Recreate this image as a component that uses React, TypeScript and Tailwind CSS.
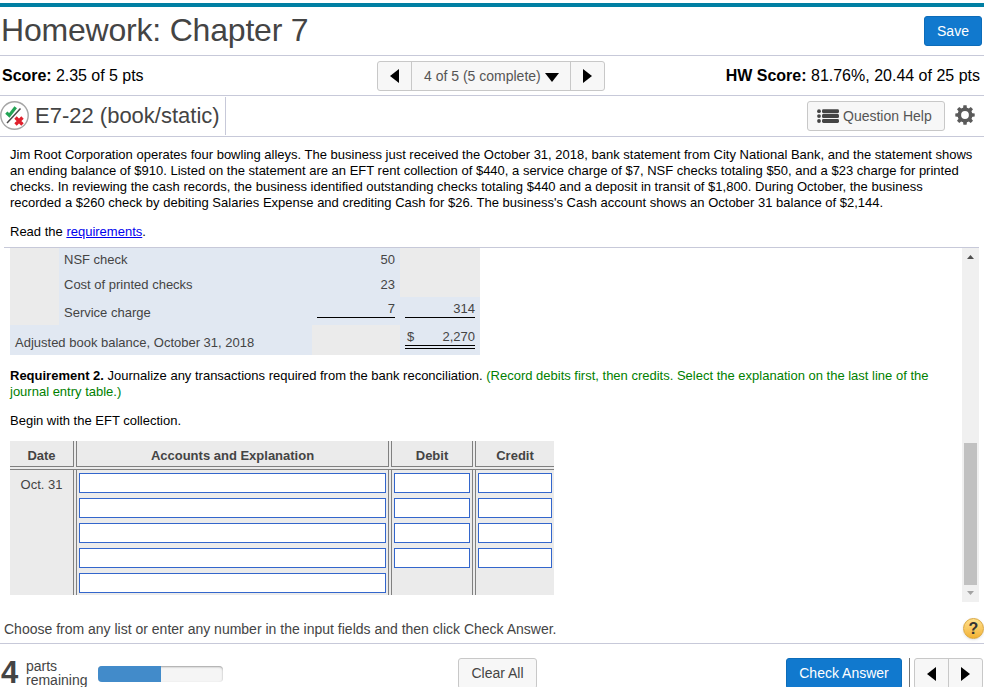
import type { ReactNode } from "react";
import clsx from "clsx";

const Arrow = ({ dir }: { dir: "left" | "right" | "down" }) => {
  const points = {
    left: "9,0 9,14 0,7",
    right: "0,0 0,14 9,7",
    down: "0,0 14,0 7,9",
  };
  return (
    <svg
      width={dir === "down" ? 14 : 9}
      height={dir === "down" ? 9 : 14}
      className={clsx("shrink-0", dir === "down" ? "mt-[3px]" : "mt-px")}
    >
      <polygon points={points[dir]} fill="#000" />
    </svg>
  );
};

const ResultIcon = () => (
  <svg width="30" height="30" viewBox="0 0 30 30" className="shrink-0">
    <circle cx="14.5" cy="14.5" r="13.7" fill="#fff" stroke="#a6a6a6" strokeWidth="1.4" />
    <path d="M6.3 11.6l3 2.8 6.4-8.2" fill="none" stroke="#23a455" strokeWidth="3.2" />
    <path d="M7 22L20.5 7.5" stroke="#4a4a4a" strokeWidth="1.5" />
    <path d="M15.5 16.5l7 7M22.5 16.5l-7 7" stroke="#e0202c" strokeWidth="3.4" />
  </svg>
);

const ListIcon = () => (
  <svg width="22" height="15" viewBox="0 0 22 15" fill="#444" className="mt-px shrink-0">
    {[2.2, 7.1, 12].map((y) => (
      <g key={y}>
        <circle cx="2" cy={y} r="1.9" />
        <rect x="5" y={y - 2} width="17" height="4" rx="1.4" />
      </g>
    ))}
  </svg>
);

const GearIcon = () => (
  <svg width="20" height="20" viewBox="0 0 20 20" className="shrink-0">
    <g fill="#5a5a5a">
      {[0, 45, 90, 135, 180, 225, 270, 315].map((a) => (
        <path key={a} d="M8 4L8.4 0.3h3.2L12 4z" transform={`rotate(${a} 10 10)`} />
      ))}
    </g>
    <circle cx="10" cy="10" r="5.7" fill="none" stroke="#5a5a5a" strokeWidth="3.6" />
  </svg>
);

const Cell = ({ className, children }: { className?: string; children?: ReactNode }) => (
  <div className={clsx("text-[#444]", className)}>{children}</div>
);

const Inputs = ({ count }: { count: number }) => (
  <div className="flex flex-col gap-[5px]">
    {Array.from({ length: count }, (_, i) => (
      <input
        key={i}
        type="text"
        className="block h-5 w-full border border-[#3366cc] bg-white px-1 outline-none"
      />
    ))}
  </div>
);

const BalanceTable = () => (
  <div className="flex h-[107px] w-[470px] flex-col bg-[#e1e8f2] text-[13px] leading-4">
    <div className="flex h-[77px]">
      <div className="w-[49px] bg-[#ebebeb]" />
      <div className="w-[253px] pl-[5px] text-[#444]">
        <p className="mt-1">NSF check</p>
        <p className="mt-[9px]">Cost of printed checks</p>
        <p className="mt-3">Service charge</p>
      </div>
      <div className="w-[88px] pr-[5px] pl-[5px] text-right text-[#444]">
        <p className="mt-1">50</p>
        <p className="mt-[9px]">23</p>
        <p className="mt-2 h-[17px] border-b border-black">7</p>
      </div>
      <div className="w-20 text-right text-[#444]">
        <div className="h-[49px] bg-[#ebebeb]" />
        <p className="mx-[5px] mt-1 h-[17px] border-b border-black">314</p>
      </div>
    </div>
    <div className="flex h-[30px]">
      <Cell className="w-[302px] pt-[10px] pl-[5px]">Adjusted book balance, October 31, 2018</Cell>
      <div className="w-[88px] bg-[#ebebeb]" />
      <Cell className="w-20 px-[5px] pt-1">
        <div className="h-5 border-b border-black">
          <div className="flex h-[17px] justify-between border-b border-black pl-[2px]">
            <span>$</span>
            <span>2,270</span>
          </div>
        </div>
      </Cell>
    </div>
  </div>
);

const JournalTable = () => (
  <div className="w-[544px] bg-[#ebebeb] text-[13px] text-[#444]">
    <div className="grid h-[26px] grid-cols-[64px_313px_82px_79px] gap-x-[2px] text-center leading-5 font-bold">
      <div className="border-r border-b border-[#808080] pt-[5px]">Date</div>
      <div className="border-x border-b border-[#808080] pt-[5px]">Accounts and Explanation</div>
      <div className="border-x border-b border-[#808080] pt-[5px]">Debit</div>
      <div className="border-b border-l border-[#808080] pt-[5px]">Credit</div>
    </div>
    <div className="mt-[2px] grid h-[126px] grid-cols-[64px_313px_82px_79px] gap-x-[2px] border-t border-[#808080]">
      <div className="border-r border-[#808080] pt-[7px] text-center leading-4">Oct. 31</div>
      <div className="border-x border-[#808080] px-[2px] pt-[3px]">
        <Inputs count={5} />
      </div>
      <div className="border-x border-[#808080] px-[2px] pt-[3px]">
        <Inputs count={4} />
      </div>
      <div className="border-l border-[#808080] px-[2px] pt-[3px]">
        <Inputs count={4} />
      </div>
    </div>
  </div>
);

const ScrollBar = () => (
  <div className="flex w-[17px] shrink-0 flex-col items-center bg-[#f0f0f0]">
    <svg width="7" height="4" className="mt-[7px]">
      <polygon points="0,4 7,4 3.5,0" fill="#505050" />
    </svg>
    <div className="mt-[184px] h-[142px] w-[13px] bg-[#c1c1c1]" />
    <svg width="7" height="4" className="mt-[6px]">
      <polygon points="0,0 7,0 3.5,4" fill="#a3a3a3" />
    </svg>
  </div>
);

export default function App() {
  return (
    <div className="flex h-[687px] w-[984px] flex-col overflow-hidden bg-white font-['Liberation_Sans',Arial,sans-serif] text-black">
      <div className="mt-[3px] h-1 shrink-0 bg-[#007fa3]" />
      <header className="flex h-[49px] shrink-0 items-center justify-between border-b border-[#c7c9d9] pr-[2px] pl-px">
        <h1 className="-mt-[2px] text-[32px] leading-[46px] tracking-[-0.2px] text-[#444]">
          Homework: Chapter 7
        </h1>
        <button className="h-[30px] w-[58px] rounded-[3px] border border-[#0d6cb9] bg-[#1179ce] pb-px text-sm text-white">
          Save
        </button>
      </header>

      <div className="flex h-10 shrink-0 items-center border-b border-[#c7c9d9] pr-1 pl-[2px] text-base">
        <p className="w-[375px] tracking-[-0.04px]">
          <b>Score:</b> 2.35 of 5 pts
        </p>
        <div className="flex h-[30px] w-[228px] rounded-[3px] border border-[#c8c8c8] bg-[#f7f7f7] text-sm text-[#555]">
          <button className="flex w-[34px] items-center justify-center border-r border-[#c8c8c8]">
            <Arrow dir="left" />
          </button>
          <button className="flex flex-1 items-center gap-1 pl-3">
            4 of 5 (5 complete) <Arrow dir="down" />
          </button>
          <button className="flex w-[34px] items-center justify-center border-l border-[#c8c8c8]">
            <Arrow dir="right" />
          </button>
        </div>
        <p className="ml-auto">
          <b>HW Score:</b> 81.76%, 20.44 of 25 pts
        </p>
      </div>

      <div className="flex h-[41px] shrink-0 items-center border-b border-[#c7c9d9]">
        <div className="flex h-[38px] w-[226px] items-center border-r border-[#c7c9d9]">
          <ResultIcon />
          <h2 className="-mt-[2px] ml-[5px] text-[22px] whitespace-nowrap text-[#444]">
            E7-22 (book/static)
          </h2>
        </div>
        <button className="ml-auto flex h-[30px] w-[138px] items-center gap-1 rounded-[3px] border border-[#c8c8c8] bg-[#f7f7f7] pl-[9px] text-sm whitespace-nowrap text-[#555]">
          <ListIcon />
          Question Help
        </button>
        <button className="mr-[9px] mb-[2px] ml-[10px]">
          <GearIcon />
        </button>
      </div>

      <section className="h-[110px] shrink-0 px-[10px] pt-[10px] text-[13px] leading-4">
        <p className="whitespace-nowrap">
          Jim Root Corporation operates four bowling alleys. The business just received the October 31, 2018, bank statement from City National Bank, and the statement shows
          <br />
          an ending balance of $910. Listed on the statement are an EFT rent collection of $440, a service charge of $7, NSF checks totaling $50, and a $23 charge for printed
          <br />
          checks. In reviewing the cash records, the business identified outstanding checks totaling $440 and a deposit in transit of $1,800. During October, the business
          <br />
          recorded a $260 check by debiting Salaries Expense and crediting Cash for $26. The business's Cash account shows an October 31 balance of $2,144.
        </p>
        <p className="mt-[13px]">
          Read the <a href="#" className="text-[#0000ee] underline">requirements</a>.
        </p>
      </section>

      <main className="mr-[5px] ml-1 flex h-[355px] shrink-0 border-t border-[#c7c9d9]">
        <div className="flex-1 pl-[6px] text-[13px] leading-4">
          <BalanceTable />
          <p className="mt-[13px] whitespace-nowrap">
            <b>Requirement 2.</b> Journalize any transactions required from the bank reconciliation.{" "}
            <span className="text-[#008000]">
              (Record debits first, then credits. Select the explanation on the last line of the
              <br />
              journal entry table.)
            </span>
          </p>
          <p className="mt-[13px] mb-3">Begin with the EFT collection.</p>
          <JournalTable />
        </div>
        <ScrollBar />
      </main>

      <div className="flex h-[42px] shrink-0 items-center justify-between border-b border-[#c7c9d9] pt-3 pl-1">
        <p className="text-sm text-[#444]">
          Choose from any list or enter any number in the input fields and then click Check Answer.
        </p>
        <div className="flex size-[21px] items-center justify-center rounded-full border border-[#d9a53d] bg-linear-to-b from-[#ffe08a] to-[#f2b22e] text-base font-bold text-[#333] shadow-sm">
          ?
        </div>
      </div>

      <footer className="flex shrink-0 items-start text-sm text-[#444]">
        <div className="flex w-[98px] pt-[15px]">
          <span className="w-[26px] pl-px text-[31px] leading-[27px] font-bold">4</span>
          <span className="leading-[14px]">
            parts
            <br />
            remaining
          </span>
        </div>
        <div className="mt-[22px] h-4 w-[125px] overflow-hidden rounded bg-[#f5f5f5] shadow-[inset_0_1px_2px_rgba(0,0,0,0.35)]">
          <div className="h-full w-[63px] bg-[#428bca]" />
        </div>
        <button className="mt-[14px] ml-[235px] h-[31px] w-[79px] rounded-[3px] border border-[#c8c8c8] bg-[#f7f7f7] pb-[2px]">
          Clear All
        </button>
        <button className="mt-[14px] ml-[249px] h-[31px] w-[116px] rounded-[3px] border border-[#0d6cb9] bg-[#1179ce] pb-[2px] text-white">
          Check Answer
        </button>
        <div className="mt-[14px] ml-[7px] h-[31px] w-px bg-[#777]" />
        <div className="mt-[14px] ml-1 flex h-[31px] w-[69px] rounded-[3px] border border-[#c8c8c8] bg-[#f7f7f7]">
          <button className="flex flex-1 items-center justify-center border-r border-[#c8c8c8]">
            <Arrow dir="left" />
          </button>
          <button className="flex flex-1 items-center justify-center">
            <Arrow dir="right" />
          </button>
        </div>
      </footer>
    </div>
  );
}
